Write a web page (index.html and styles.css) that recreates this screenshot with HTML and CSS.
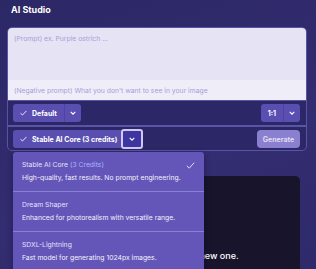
FILE: index.html
```html
<!DOCTYPE html>
<html>
  <head>
    <meta charset="utf-8" />
    <title>AI Studio</title>
    <link rel="stylesheet" href="styles.css">
  </head>
  <body>
    <div id="app">
      <h1 class="title">AI Studio</h1>

      <div class="composer">
        <textarea class="prompt" placeholder="(Prompt) ex. Purple ostrich ..."></textarea>
        <input class="negative" type="text" placeholder="(Negative prompt) What you don't want to see in your image" />

        <div class="bar">
          <div class="split">
            <button class="btn main">
              <svg class="check" viewBox="0 0 8 6"><path d="M0.6 3.2 L2.8 5.3 L7.4 0.6" /></svg>
              Default
            </button>
            <button class="btn caret">
              <svg class="chev" viewBox="0 0 6 4"><path d="M0.7 0.8 L3 3.1 L5.3 0.8" /></svg>
            </button>
          </div>
          <div class="split">
            <button class="btn main">1:1</button>
            <button class="btn caret">
              <svg class="chev" viewBox="0 0 6 4"><path d="M0.7 0.8 L3 3.1 L5.3 0.8" /></svg>
            </button>
          </div>
        </div>

        <div class="bar second">
          <div class="split">
            <button class="btn main model">
              <svg class="check" viewBox="0 0 8 6"><path d="M0.6 3.2 L2.8 5.3 L7.4 0.6" /></svg>
              Stable AI Core (3 credits)
            </button>
            <button class="btn caret open">
              <svg class="chev" viewBox="0 0 6 4"><path d="M0.7 0.8 L3 3.1 L5.3 0.8" /></svg>
            </button>
          </div>
          <button class="btn generate">Generate</button>
        </div>
      </div>

      <div class="canvas">
        <p>Write a prompt to generate a new one.</p>
      </div>

      <ul class="menu">
        <li class="item">
          <div class="name">Stable AI Core <span class="cost">(3 Credits)</span></div>
          <div class="desc">High-quality, fast results. No prompt engineering.</div>
          <svg class="tick" viewBox="0 0 10 8"><path d="M0.8 4.3 L3.6 7 L9.2 0.8" /></svg>
        </li>
        <li class="item">
          <div class="name">Dream Shaper</div>
          <div class="desc">Enhanced for photorealism with versatile range.</div>
        </li>
        <li class="item">
          <div class="name">SDXL-Lightning</div>
          <div class="desc">Fast model for generating 1024px images.</div>
        </li>
      </ul>
    </div>
  </body>
</html>
```

FILE: styles.css
```css
* {
  box-sizing: border-box;
}
body {
  margin: 0;
  height: 269px;
  overflow: hidden;
  font-family: Inter, 'Noto Sans', sans-serif;
  background: linear-gradient(160deg, #2c2765 0%, #332d71 60%, #2f2a6a 100%);
  color: #fff;
}
#app {
  position: relative;
  height: 269px;
  overflow: hidden;
  padding: 0 9px 0 7px;
}
.title {
  margin: 0;
  height: 27px;
  padding-left: 4px;
  font-size: 9px;
  font-weight: 700;
  line-height: 20px;
}
.composer {
  border: 1px solid #5a54a6;
  border-radius: 5px;
  overflow: hidden;
  background: #2c2766;
}
.prompt {
  display: block;
  width: 100%;
  height: 52px;
  margin: 0;
  padding: 6px 6px;
  border: 0;
  resize: none;
  background: #e6e4f4;
  font: 6.8px Inter, sans-serif;
  outline: none;
}
.negative {
  display: block;
  width: 100%;
  height: 20px;
  margin: 0;
  padding: 0 6px;
  border: 0;
  background: #efeef8;
  font: 6.8px Inter, sans-serif;
  outline: none;
}
.prompt::placeholder,
.negative::placeholder {
  color: #a6a0d8;
}
.bar {
  display: flex;
  justify-content: space-between;
  align-items: center;
  padding: 3px 6px 3px 5px;
  border-top: 1px solid #5a54a6;
}
.bar.second {
  border-top-width: 2px;
  padding-bottom: 2px;
}
.split {
  display: flex;
}
.btn {
  display: flex;
  align-items: center;
  gap: 5px;
  height: 18px;
  margin: 0;
  border: 0;
  padding: 0 7px;
  background: #5a4fb0;
  color: #fff;
  font: 700 7px Inter, sans-serif;
}
.split .main {
  border-radius: 3px 0 0 3px;
}
.split .main.model {
  padding-right: 4px;
}
.split .caret {
  justify-content: center;
  width: 17px;
  padding: 0;
  border-left: 1px solid #4d43a3;
  border-radius: 0 3px 3px 0;
}
.split .caret.open {
  width: 22px;
  height: 20px;
  margin: -1px 0;
  border: 2px solid #cfc9f4;
  border-radius: 3px;
  background: #3e35a0;
}
.check {
  width: 7px;
  height: 6px;
  fill: none;
  stroke: #fff;
  stroke-width: 1;
}
.chev {
  width: 6px;
  height: 4px;
  fill: none;
  stroke: #fff;
  stroke-width: 1.1;
}
.generate {
  width: 43px;
  justify-content: center;
  padding: 0;
  border-radius: 4px;
  background: #8b80d0;
  color: #dedaf4;
}
.canvas {
  height: 100px;
  margin: 25px 7px 0 6px;
  padding-top: 74px;
  border-radius: 5px;
  background: #17142b;
}
.canvas p {
  margin: 0;
  text-align: center;
  font-size: 9px;
  font-weight: 500;
  line-height: 12px;
}
.menu {
  position: absolute;
  left: 13px;
  top: 152px;
  width: 191px;
  margin: 0;
  padding: 0;
  list-style: none;
  background: #6356b8;
  border-radius: 3px 3px 0 0;
  box-shadow: 0 2px 6px rgba(10, 6, 40, 0.4);
}
.item {
  position: relative;
  padding: 8px 9px;
  border-top: 1px solid #8a80d2;
}
.item:first-child {
  border-top: 0;
}
.name {
  font-size: 6.8px;
  line-height: 10px;
  color: #e4e0fa;
}
.cost {
  color: #a9b5ff;
}
.desc {
  margin-top: 3px;
  font-size: 6.8px;
  line-height: 10px;
  color: #f3f1fb;
}
.tick {
  position: absolute;
  right: 9px;
  top: 10px;
  width: 9px;
  height: 7px;
  fill: none;
  stroke: #e8e5fb;
  stroke-width: 1.1;
}
```
